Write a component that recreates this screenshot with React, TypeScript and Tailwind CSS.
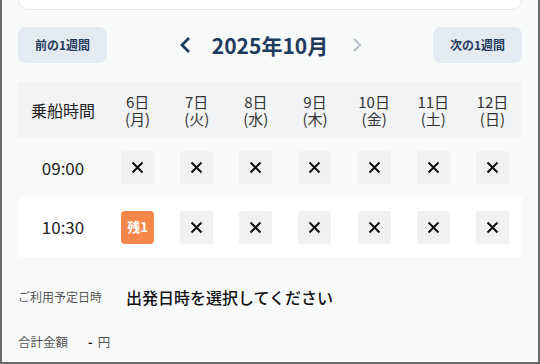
import React from "react";

const days = [
  ["6日", "(月)"],
  ["7日", "(火)"],
  ["8日", "(水)"],
  ["9日", "(木)"],
  ["10日", "(金)"],
  ["11日", "(土)"],
  ["12日", "(日)"],
];

function XBox() {
  return (
    <div className="w-[33px] h-[33px] bg-[#eff1f2] rounded-[3px] flex items-center justify-center">
      <svg width="13" height="13" viewBox="0 0 13 13">
        <path d="M1.5 1.5 L11.5 11.5 M11.5 1.5 L1.5 11.5" stroke="#111" strokeWidth="2" strokeLinecap="butt" />
      </svg>
    </div>
  );
}

function Row({ time, first, bg }: { time: string; first: React.ReactNode; bg: string }) {
  return (
    <div className={`grid grid-cols-[90px_repeat(7,1fr)] items-center ${bg}`}>
      <div className="text-center text-[17px] text-[#222]">{time}</div>
      <div className="flex justify-center">{first}</div>
      {[0, 1, 2, 3, 4, 5].map((i) => (
        <div key={i} className="flex justify-center">
          <XBox />
        </div>
      ))}
    </div>
  );
}

export default function App() {
  return (
    <div
      className="w-[540px] h-[364px] bg-[#f8fafa] border-l-2 border-r-2 border-b-2 border-[#6a6a6a] overflow-hidden relative"
      style={{ fontFamily: '"Noto Sans CJK JP", "Noto Sans", sans-serif' }}
    >
      <div className="mx-[16px] h-[8px] -mt-[10px] bg-white border border-[#e3e6e8] rounded-b-[10px] box-content pt-[10px]" />
      <div className="px-[16px]">
        <div className="flex items-center justify-between mt-[17px] h-[36px]">
          <button className="w-[89px] h-[36px] bg-[#e4eaf1] rounded-[8px] text-[12px] font-bold text-[#1f3a5c]">
            前の1週間
          </button>
          <div className="flex items-center ml-[2px]">
            <svg width="14" height="20" viewBox="0 0 14 20" className="mr-[20px]">
              <path d="M11 3 L4 10 L11 17" stroke="#1f3a5c" strokeWidth="2.8" fill="none" />
            </svg>
            <span className="text-[21px] font-bold text-[#1f3a5c] leading-none">2025年10月</span>
            <svg width="14" height="20" viewBox="0 0 14 20" className="ml-[22px]">
              <path d="M4 4 L10 10 L4 16" stroke="#b7bfc8" strokeWidth="2" fill="none" />
            </svg>
          </div>
          <button className="w-[89px] h-[36px] bg-[#e4eaf1] rounded-[8px] text-[12px] font-bold text-[#1f3a5c]">
            次の1週間
          </button>
        </div>

        <div className="mt-[19px]">
          <div className="grid grid-cols-[90px_repeat(7,1fr)] items-center h-[56px] bg-[#f1f3f4]">
            <div className="text-center text-[16px] text-[#222]">乗船時間</div>
            {days.map(([d, w]) => (
              <div key={d} className="text-center text-[15px] leading-[17px] text-[#333]">
                <div>{d}</div>
                <div>{w}</div>
              </div>
            ))}
          </div>
          <Row time="09:00" bg="bg-[#f8fafa] h-[59px]" first={<XBox />} />
          <Row
            time="10:30"
            bg="bg-white h-[60px]"
            first={
              <div className="w-[33px] h-[33px] bg-[#f5874a] rounded-[4px] flex items-center justify-center text-white text-[13px] font-bold">
                残1
              </div>
            }
          />
        </div>

        <div className="flex items-center mt-[28px]">
          <span className="text-[12px] text-[#555] w-[108px]">ご利用予定日時</span>
          <span className="text-[16px] font-medium text-[#111]">出発日時を選択してください</span>
        </div>
        <div className="flex items-center mt-[24px] text-[12.5px] text-[#555]">
          <span className="w-[70px]">合計金額</span>
          <span className="font-bold text-[#111] mr-[5px]">-</span>
          <span>円</span>
        </div>
      </div>
    </div>
  );
}
